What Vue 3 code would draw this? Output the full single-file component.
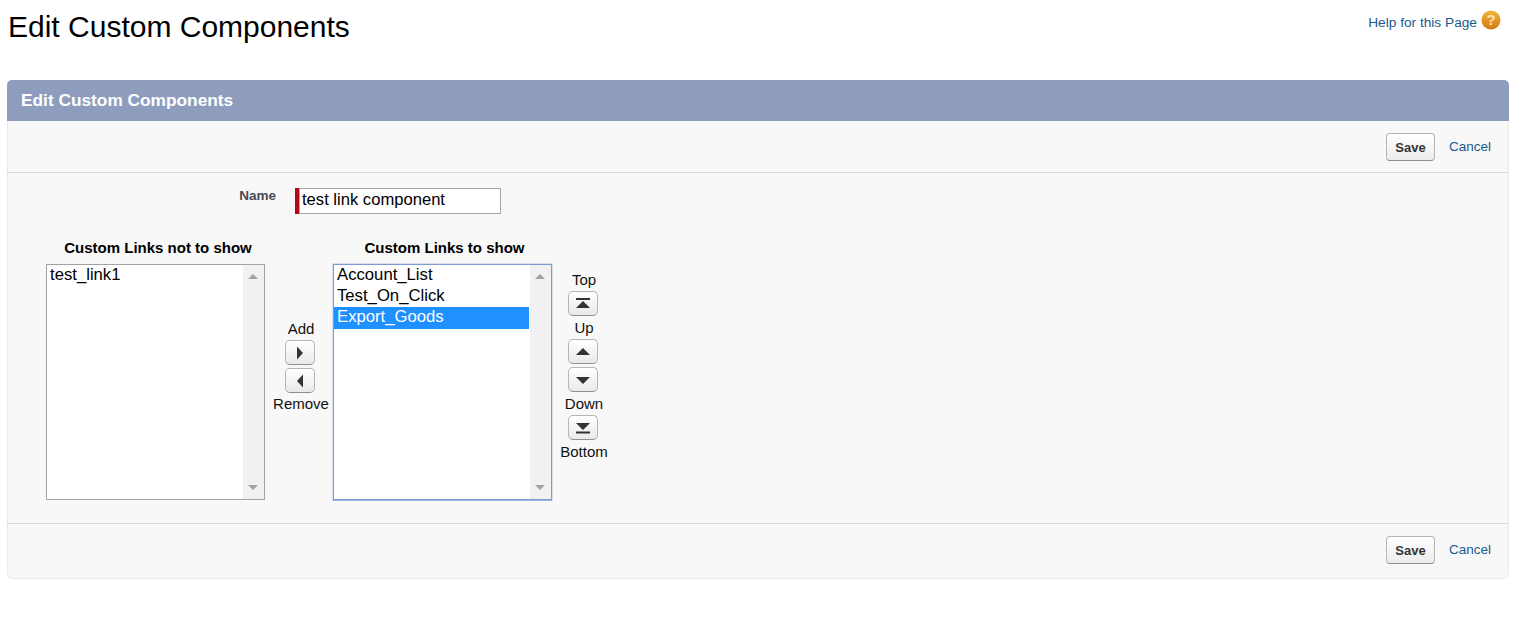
<script setup>
const leftItems = ['test_link1']
const rightItems = ['Account_List', 'Test_On_Click', 'Export_Goods']
</script>

<template>
  <div class="page">
    <header class="page-head">
      <h1 class="title">Edit Custom Components</h1>
      <a class="help">
        <span>Help for this Page</span>
        <svg class="help-icon" width="20" height="20" viewBox="0 0 20 20">
          <defs>
            <linearGradient id="helpGrad" x1="0" y1="0" x2="0" y2="1">
              <stop offset="0" stop-color="#f2b33d" />
              <stop offset="1" stop-color="#d17a12" />
            </linearGradient>
          </defs>
          <circle cx="10" cy="10" r="9.5" fill="url(#helpGrad)" />
          <text x="10" y="15" text-anchor="middle" class="help-mark">?</text>
        </svg>
      </a>
    </header>

    <section class="panel">
      <div class="panel-title">Edit Custom Components</div>

      <div class="toolbar toolbar-top">
        <button class="save">Save</button>
        <a class="cancel">Cancel</a>
      </div>

      <div class="body">
        <div class="name-row">
          <label class="name-label">Name</label>
          <div class="required-bar"></div>
          <div class="name-input">test link component</div>
        </div>

        <div class="duel">
          <div class="list-col left-col">
            <div class="list-head">Custom Links not to show</div>
            <div class="listbox">
              <ul class="options">
                <li v-for="item in leftItems" :key="item">{{ item }}</li>
              </ul>
              <div class="scrollbar">
                <span class="arrow-up"></span>
                <span class="arrow-down"></span>
              </div>
            </div>
          </div>

          <div class="move-col">
            <span class="ctl-label">Add</span>
            <button class="ctl">
              <svg width="10" height="14" viewBox="0 0 10 14"><path d="M2 0.500l6 6.500-6 6.500z" fill="#333" /></svg>
            </button>
            <button class="ctl">
              <svg width="10" height="14" viewBox="0 0 10 14"><path d="M8 0.500L2 7l6 6.500z" fill="#333" /></svg>
            </button>
            <span class="ctl-label">Remove</span>
          </div>

          <div class="list-col right-col">
            <div class="list-head">Custom Links to show</div>
            <div class="listbox focused">
              <ul class="options">
                <li
                  v-for="(item, i) in rightItems"
                  :key="item"
                  :class="{ selected: i === 2 }"
                >{{ item }}</li>
              </ul>
              <div class="scrollbar">
                <span class="arrow-up"></span>
                <span class="arrow-down"></span>
              </div>
            </div>
          </div>

          <div class="order-col">
            <span class="ctl-label">Top</span>
            <button class="ctl">
              <svg width="18" height="14" viewBox="0 0 18 14"><path d="M2 1h14v2H2zM9 4l7 7H2z" fill="#333" /></svg>
            </button>
            <span class="ctl-label">Up</span>
            <button class="ctl">
              <svg width="18" height="14" viewBox="0 0 18 14"><path d="M9 3l7 7H2z" fill="#333" /></svg>
            </button>
            <button class="ctl">
              <svg width="18" height="14" viewBox="0 0 18 14"><path d="M2 4h14l-7 7z" fill="#333" /></svg>
            </button>
            <span class="ctl-label">Down</span>
            <button class="ctl">
              <svg width="18" height="14" viewBox="0 0 18 14"><path d="M2 2h14l-7 7zM2 10.500h14v2H2z" fill="#333" /></svg>
            </button>
            <span class="ctl-label">Bottom</span>
          </div>
        </div>
      </div>

      <div class="toolbar toolbar-bottom">
        <button class="save">Save</button>
        <a class="cancel">Cancel</a>
      </div>
    </section>
  </div>
</template>

<style>
html, body { background: #fff; }
</style>

<style scoped>
.page {
  height: 618px;
  overflow: hidden;
  font-family: "Liberation Sans", Arial, sans-serif;
  color: #000;
}
.page-head {
  height: 80px;
  display: flex;
  justify-content: space-between;
  align-items: flex-start;
  padding: 0 13px 0 8px;
  box-sizing: border-box;
}
.title {
  margin: 11px 0 0;
  font-size: 30px;
  line-height: 32px;
  font-weight: 400;
}
.help {
  display: flex;
  align-items: center;
  gap: 4px;
  margin-top: 10px;
  font-size: 13.7px;
  color: #1a5a8e;
}
.help span { position: relative; top: 2px; }
.help-mark { font: bold 15px "Liberation Sans", Arial, sans-serif; fill: #fbe3b4; }

.panel {
  margin: 0 5px 0 7px;
  height: 499px;
  display: flex;
  flex-direction: column;
  box-sizing: border-box;
  background: #f8f8f8;
  border-radius: 5px;
  box-shadow: inset 0 0 0 1px #eaeaea;
}
.panel-title {
  height: 41px;
  flex: none;
  box-sizing: border-box;
  padding: 0 14px;
  line-height: 40px;
  background: #8e9dbe;
  color: #fff;
  font-size: 17.3px;
  font-weight: 700;
  border-radius: 5px 5px 0 0;
}
.toolbar {
  flex: none;
  display: flex;
  justify-content: flex-end;
  align-items: flex-start;
  gap: 14px;
  padding-right: 18px;
  box-sizing: border-box;
}
.toolbar-top {
  height: 52px;
  padding-top: 12px;
  border-bottom: 1px solid #dbdbdb;
}
.toolbar-bottom {
  height: 56px;
  padding-top: 12px;
  border-top: 1px solid #dbdbdb;
}
.save {
  width: 49px;
  height: 28px;
  padding: 0;
  font: bold 13px "Liberation Sans", Arial, sans-serif;
  color: #333;
  background: linear-gradient(#fff, #ececec);
  border: 1px solid #b5b5b5;
  border-bottom-color: #8f8f8f;
  border-radius: 4px;
}
.cancel {
  font-size: 13.5px;
  line-height: 28px;
  color: #1a5a8e;
}

.body {
  flex: 1;
  padding: 15px 0 0 39px;
  box-sizing: border-box;
}
.name-row {
  display: flex;
  align-items: flex-start;
  height: 51px;
}
.name-label {
  width: 230px;
  text-align: right;
  font-size: 13.5px;
  font-weight: 700;
  line-height: 15px;
  color: #4a4a56;
}
.required-bar {
  width: 4px;
  height: 26px;
  margin-left: 19px;
  background-color: #b0091c;
}
.name-input {
  width: 202px;
  height: 26px;
  box-sizing: border-box;
  padding-left: 2px;
  font-size: 16.6px;
  line-height: 21px;
  color: #000;
  background: #fff;
  border: 1px solid #a5a5a5;
}

.duel {
  display: flex;
  align-items: flex-start;
}
.list-col { flex: none; display: flex; flex-direction: column; }
.left-col { width: 219px; }
.right-col { width: 219px; }
.list-head {
  height: 25px;
  font-size: 15px;
  line-height: 17px;
  font-weight: 700;
  text-align: center;
  padding-left: 5px;
}
.right-col .list-head { padding-left: 4px; }
.listbox {
  height: 236px;
  display: flex;
  box-sizing: border-box;
  background: #fff;
  border: 1px solid #a3a3a3;
}
.listbox.focused {
  border-color: #7b9bd2;
  box-shadow: 0 0 0 1px rgba(123, 155, 210, 0.25), 0 1px 0 rgba(123, 155, 210, 0.6);
}
.options {
  flex: 1;
  list-style: none;
  margin: 0;
  padding: 0;
  font-size: 16.7px;
  line-height: 19px;
}
.options li { padding-left: 3px; height: 21px; }
.options li.selected { background: #1e90ff; color: #fff; height: 22px; }
.scrollbar {
  flex: none;
  width: 21px;
  margin-left: 1px;
  background: #f1f1f1;
  position: relative;
}
.arrow-up, .arrow-down {
  position: absolute;
  left: 5px;
  width: 0;
  height: 0;
  border-left: 5px solid transparent;
  border-right: 5px solid transparent;
}
.arrow-up { top: 9px; border-bottom: 5px solid #a3a3a3; }
.arrow-down { bottom: 9px; border-top: 5px solid #a3a3a3; }

.move-col, .order-col {
  flex: none;
  display: flex;
  flex-direction: column;
  align-items: center;
}
.move-col { width: 68px; box-sizing: border-box; padding: 78px 0 0 2px; }
.order-col { width: 62px; padding-top: 29px; }
.ctl-label {
  font-size: 15px;
  line-height: 23px;
  padding-left: 2px;
  color: #111;
}
.move-col .ctl-label:last-child { line-height: 22px; }
.ctl {
  width: 30px;
  height: 25px;
  padding: 0;
  display: flex;
  align-items: center;
  justify-content: center;
  background: linear-gradient(#fff, #e9e9e9);
  border: 1px solid #b5b5b5;
  border-bottom-color: #8f8f8f;
  border-radius: 5px;
}
.ctl + .ctl { margin-top: 3px; }
</style>
